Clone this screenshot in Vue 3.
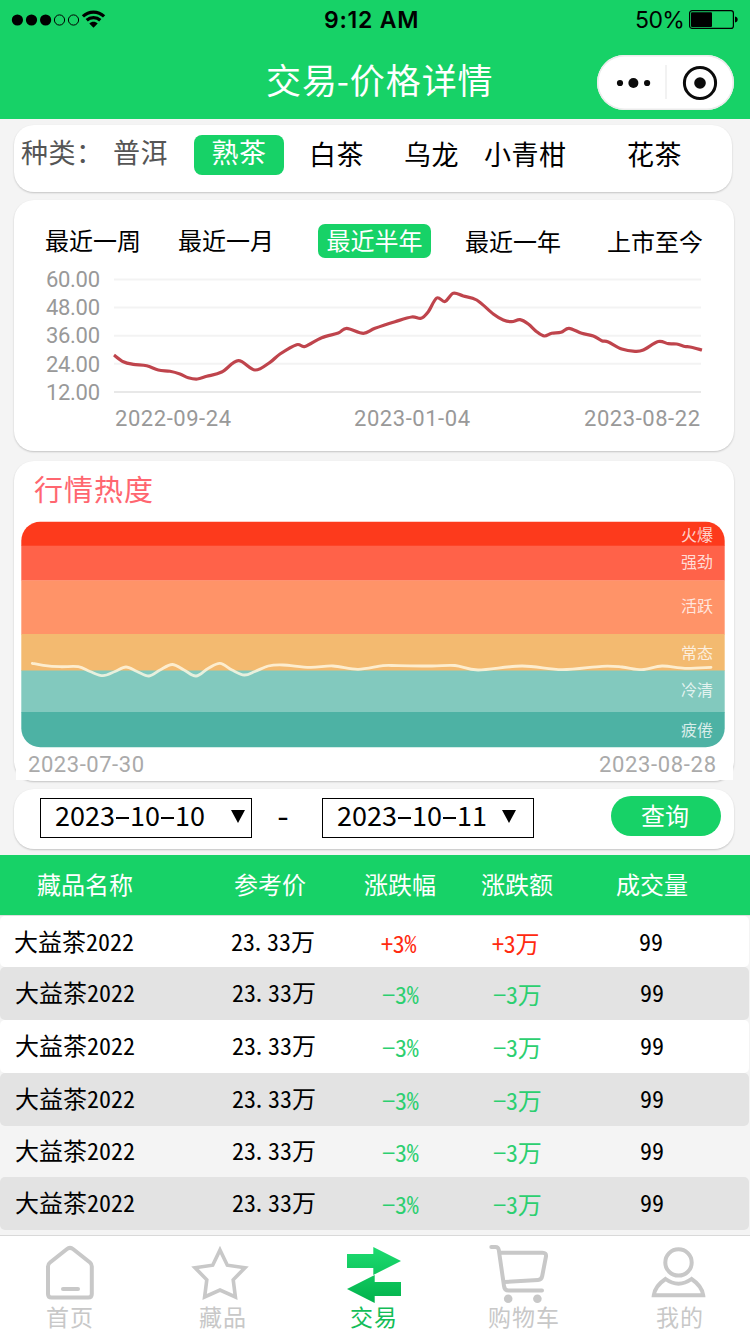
<template>
  <div class="page">
    <header class="header">
      <div class="status-bar">
        <svg class="signal" width="102" height="22" viewBox="0 0 102 22">
          <circle v-for="x in [12.4, 26.5, 40.6]" :key="x" :cx="x" cy="11" r="5.6" />
          <circle v-for="x in [54.5, 68.5]" :key="x" :cx="x" cy="11" r="5.1" class="signal-empty" />
          <g transform="translate(88.5 -0.5)" class="wifi">
            <path d="M-10.6 7.9C-4.6 2.2 4.6 2.2 10.6 7.9" />
            <path d="M-6.8 11.8C-3 8.3 3 8.3 6.8 11.8" />
            <path d="M0 19.2L-4.2 15C-1.8 12.7 1.8 12.7 4.2 15Z" class="wifi-dot" />
          </g>
        </svg>
        <span class="time">9:12 AM</span>
        <div class="battery">
          <span class="battery-text">50%</span>
          <svg width="50" height="20" viewBox="0 0 50 20">
            <rect x="0.6" y="0.6" width="43.8" height="17.8" rx="2.5" fill="none" stroke="#000" stroke-width="1.2" />
            <rect x="2" y="2.2" width="21" height="14.8" rx="1" />
            <path d="M46 6.5C49.6 7 49.6 12 46 12.5Z" />
          </svg>
        </div>
      </div>
      <div class="nav-bar">
        <h1 class="title">交易<i>-</i>价格详情</h1>
        <div class="capsule">
          <svg width="137" height="55" viewBox="0 0 137 55">
            <circle cx="23" cy="28" r="3.1" />
            <circle cx="36.4" cy="28" r="5" />
            <circle cx="50.1" cy="28" r="3.1" />
            <path d="M69 10V44" stroke="#efefef" stroke-width="1.6" />
            <circle cx="103" cy="28" r="15.6" fill="none" stroke="#0b0b0b" stroke-width="3" />
            <circle cx="103" cy="28" r="5.8" />
          </svg>
        </div>
      </div>
    </header>

    <section class="card kinds">
      <span class="kind-label">种类：</span>
      <span
        v-for="item in kinds"
        :key="item"
        class="kind"
        :class="{ active: item === activeKind, muted: item === '普洱' }"
        @click="activeKind = item"
      >{{ item }}</span>
    </section>

    <section class="card price">
      <div class="ranges">
        <span
          v-for="item in ranges"
          :key="item"
          class="range"
          :class="{ active: item === activeRange }"
          @click="activeRange = item"
        >{{ item }}</span>
      </div>
      <svg class="price-chart" width="720" height="176" viewBox="14 265 720 176">
        <g v-for="(label, i) in priceAxis" :key="label">
          <text x="46" :y="287.2 + i * 28.1" textLength="54" class="axis">{{ label }}</text>
          <line x1="114" x2="701" :y1="279.5 + i * 28.1" :y2="279.5 + i * 28.1" class="grid" :class="{ base: i === 4 }" />
        </g>
        <path :d="smooth(pricePoints)" class="price-line" />
        <text x="115" y="426" textLength="116" class="axis">2022-09-24</text>
        <text x="354" y="426" textLength="116" class="axis">2023-01-04</text>
        <text x="584" y="426" textLength="116" class="axis">2023-08-22</text>
      </svg>
    </section>

    <section class="card heat">
      <h2 class="heat-title">行情热度</h2>
      <svg class="heat-chart" width="717" height="264" viewBox="16 516 717 264">
        <defs>
          <clipPath id="heat-clip">
            <rect x="21.3" y="521.7" width="703.4" height="225.6" rx="19" />
          </clipPath>
        </defs>
        <rect x="16" y="516" width="717" height="264" fill="#fff" />
        <g clip-path="url(#heat-clip)">
          <rect v-for="band in bands" :key="band.name" x="21" :y="band.y" width="704" :height="band.h" :fill="band.color" />
        </g>
        <text v-for="band in bands" :key="band.name" x="681" :y="band.text" textLength="32" class="band-name">{{ band.name }}</text>
        <path :d="smooth(heatPoints)" class="heat-line" />
        <text x="28" y="771.5" textLength="116" class="axis heat-date">2023-07-30</text>
        <text x="599" y="771.5" textLength="117" class="axis heat-date">2023-08-28</text>
      </svg>
    </section>

    <section class="card query">
      <div class="date-box"><span>2023</span><i></i><span>10</span><i></i><span>10</span><b class="arrow"></b></div>
      <span class="to">-</span>
      <div class="date-box second"><span>2023</span><i></i><span>10</span><i></i><span>11</span><b class="arrow"></b></div>
      <button class="query-btn">查询</button>
    </section>

    <section class="table">
      <div class="thead">
        <span v-for="item in columns" :key="item">{{ item }}</span>
      </div>
      <div v-for="(row, i) in rows" :key="i" class="row" :class="row.up ? 'up' : 'down'">
        <span>大益茶2022</span>
        <span>23<em>.</em>33万</span>
        <span class="change">{{ row.up ? '+' : '−' }}3%</span>
        <span class="change">{{ row.up ? '+' : '−' }}3万</span>
        <span>99</span>
      </div>
    </section>

    <nav class="tab-bar">
      <a class="tab">
        <svg width="60" height="60" viewBox="40 1244 60 60" class="line-icon">
          <path d="M50 1262.5L66.7 1249.2Q70 1246.6 73.3 1249.2L90 1262.5Q91.8 1264 91.8 1266.5V1294Q91.8 1297.6 88.2 1297.6H51.6Q48 1297.6 48 1294V1266.5Q48 1264 50 1262.5Z" />
          <path d="M63 1289H78" stroke-linecap="round" />
        </svg>
        <span>首页</span>
      </a>
      <a class="tab collect">
        <svg width="60" height="60" viewBox="190 1244 60 60" class="line-icon">
          <path d="M220 1250L227.3 1265.2L245 1267.7L233.2 1279.8L235.4 1297L220 1290L204.6 1297L206.8 1279.8L195 1267.7L212.7 1265.2Z" stroke-width="3.6" />
        </svg>
        <span>藏品</span>
      </a>
      <a class="tab active">
        <svg width="60" height="60" viewBox="344 1244 60 60">
          <defs>
            <linearGradient id="trade" x1="0" y1="1247" x2="0" y2="1303" gradientUnits="userSpaceOnUse">
              <stop offset="0" stop-color="#1ddb70" />
              <stop offset="1" stop-color="#02b24c" />
            </linearGradient>
          </defs>
          <path d="M347 1254H373.3V1247L401 1261L373.3 1275V1268H347ZM401 1282H374.7V1275L347 1289L374.7 1303V1296H401Z" fill="url(#trade)" />
        </svg>
        <span>交易</span>
      </a>
      <a class="tab">
        <svg width="64" height="60" viewBox="492 1244 64 60" class="line-icon">
          <path d="M491.3 1247H495.5Q498.3 1247 498.8 1250L504 1286Q504.5 1290.5 508.5 1290.5H542" stroke-linecap="round" />
          <path d="M500 1252.8H542.5Q546.5 1252.8 546 1256.5L542.2 1276Q541.5 1279.8 538 1279.9L504 1282" />
          <circle cx="508.2" cy="1298.7" r="4.3" class="solid" />
          <circle cx="537.4" cy="1298.7" r="4.3" class="solid" />
        </svg>
        <span>购物车</span>
      </a>
      <a class="tab">
        <svg width="60" height="60" viewBox="650 1244 60 60" class="line-icon">
          <circle cx="678.5" cy="1262.4" r="13.2" />
          <path d="M665.5 1279Q655 1286 653.8 1295.3H703.2Q702 1286 691.5 1279Q678.5 1288.4 665.5 1279Z" />
        </svg>
        <span>我的</span>
      </a>
    </nav>
  </div>
</template>

<script setup>
import { ref } from 'vue'

const kinds = ['普洱', '熟茶', '白茶', '乌龙', '小青柑', '花茶']
const activeKind = ref('熟茶')

const ranges = ['最近一周', '最近一月', '最近半年', '最近一年', '上市至今']
const activeRange = ref('最近半年')

const priceAxis = ['60.00', '48.00', '36.00', '24.00', '12.00']
const pricePoints = [
  [114, 355], [123.3, 361.7], [133.3, 364.3], [146.7, 365.7], [158.3, 370], [170, 371.3], [180, 374],
  [188.3, 377.7], [197.3, 379], [206.7, 376.3], [221.7, 372], [238.3, 360.7], [255, 370], [270, 362.3],
  [280, 354], [296.7, 344.7], [305, 346.5], [321.7, 337.7], [338.3, 333], [346.7, 328.3], [363.3, 333.3],
  [375, 328.3], [395, 321.7], [411.7, 317], [421, 318.3], [428.3, 311.7], [436.7, 298], [445, 301.5],
  [453.3, 293.3], [463.3, 296], [476.7, 300], [493.3, 314], [503.3, 320], [511.7, 321.7], [520, 319.7],
  [528.3, 324], [536.7, 331.7], [544.3, 336], [551.7, 333.3], [561, 332.3], [569, 328.3], [581.7, 333.3],
  [593.3, 336], [601.7, 340.7], [608.3, 342], [621.7, 349], [635, 351.3], [643.3, 350], [658.3, 341.5],
  [668.3, 343.7], [676.7, 344], [685, 346.5], [690, 347], [702, 350]
]

const bands = [
  { name: '火爆', y: 521, h: 25, text: 541, color: '#fd3a1c' },
  { name: '强劲', y: 545.7, h: 35, text: 568, color: '#ff6249' },
  { name: '活跃', y: 580.5, h: 54, text: 612, color: '#ff9368' },
  { name: '常态', y: 634, h: 37, text: 659, color: '#f3ba70' },
  { name: '冷清', y: 670.5, h: 42, text: 696, color: '#82c9be' },
  { name: '疲倦', y: 712, h: 36, text: 736, color: '#4db2a4' }
]
const heatPoints = [
  [32.3, 663.3], [43.3, 665.3], [60, 666.7], [78.3, 666.7], [90, 671.5], [103, 675.7], [115, 671.5],
  [126, 667], [137, 671.5], [149, 676], [160, 670], [172.3, 664.5], [184, 670], [196, 676], [208, 668.5],
  [220, 663.3], [232, 670], [244.3, 675], [255, 671.5], [268.3, 666], [283, 665], [310, 667.3],
  [333, 666], [358, 669.3], [383, 665.7], [398, 665.7], [432, 666], [455, 665.5], [478, 670],
  [522, 666], [562, 669.7], [602, 666.3], [622, 667], [642, 669.7], [662, 666], [685, 668.3], [711, 667.3]
]

// Catmull-Rom 转三次贝塞尔
function smooth(points) {
  let d = `M${points[0][0]} ${points[0][1]}`
  for (let i = 0; i < points.length - 1; i++) {
    const p0 = points[i - 1] || points[i]
    const p1 = points[i]
    const p2 = points[i + 1]
    const p3 = points[i + 2] || p2
    d += `C${p1[0] + (p2[0] - p0[0]) / 6} ${p1[1] + (p2[1] - p0[1]) / 6} ${p2[0] - (p3[0] - p1[0]) / 6} ${p2[1] - (p3[1] - p1[1]) / 6} ${p2[0]} ${p2[1]}`
  }
  return d
}

const columns = ['藏品名称', '参考价', '涨跌幅', '涨跌额', '成交量']
const rows = [{ up: true }, { up: false }, { up: false }, { up: false }, { up: false }, { up: false }]
</script>

<style>
body {
  margin: 0;
  background: #f4f4f4;
}
</style>

<style scoped>
.page {
  width: 750px;
  height: 1334px;
  overflow: hidden;
  background: #f4f4f4;
  font-family: 'Noto Sans CJK SC', sans-serif;
  color: #000;
  white-space: nowrap;
  display: flex;
  flex-direction: column;
}

.header {
  height: 119px;
  background: #17d267;
  flex: none;
}

.status-bar {
  height: 40px;
  display: grid;
  grid-template-columns: 324px 1fr 115px;
  align-items: center;
  font-family: Inter, sans-serif;
}

.signal {
  margin-top: -1px;
}

.signal-empty {
  fill: none;
  stroke: #000;
  stroke-width: 1;
}

.signal {
  margin-left: 5px;
}

.wifi path {
  fill: none;
  stroke: #000;
  stroke-width: 3.2;
}

.wifi .wifi-dot {
  fill: #000;
  stroke: none;
}

.time {
  font-size: 23px;
  font-weight: 600;
  letter-spacing: 0.75px;
}

.battery {
  display: flex;
  align-items: center;
}

.battery-text {
  width: 54px;
  font-size: 23px;
  font-weight: 400;
  letter-spacing: -0.6px;
}

.nav-bar {
  height: 79px;
  display: grid;
  grid-template-columns: 1fr 137px;
  padding: 0 16px 0 266px;
}

.title {
  margin: 18px 0 0;
  color: #fff;
  font-size: 35px;
  line-height: 42px;
  font-weight: 400;
  letter-spacing: 0.9px;
}

.title i {
  font-style: normal;
  margin-left: -1px;
}

.capsule {
  width: 137px;
  height: 55px;
  margin-top: 15px;
  border-radius: 28px;
  background: #fff;
  box-shadow: inset 0 0 0 1.5px #ebebeb;
}

.capsule svg {
  display: block;
  fill: #0b0b0b;
}

.card {
  width: 720px;
  margin-left: 14px;
  box-sizing: border-box;
  background: #fff;
  border-radius: 20px;
  box-shadow: 0 1px 2px rgba(0, 0, 0, 0.2);
  flex: none;
}

.kinds {
  width: 718px;
  height: 67px;
  margin-top: 6px;
  padding: 10px 0 0 7px;
  display: grid;
  grid-template-columns: 92px 81px 115px 95px 80px 143px 80px;
  align-items: start;
  font-size: 27px;
  line-height: 37px;
  letter-spacing: 0.5px;
}

.kind-label,
.kind.muted {
  color: #555;
  line-height: 34px;
}

.kind.active {
  width: 90px;
  height: 40px;
  line-height: 34px;
  border-radius: 8px;
  background: #17d267;
  color: #fff;
  text-align: center;
}

.price {
  height: 251px;
  margin-top: 8px;
  padding-top: 24px;
}

.ranges {
  display: grid;
  grid-template-columns: 133px 140px 147px 142px 100px;
  height: 34px;
  padding-left: 31px;
  font-size: 24px;
  line-height: 31px;
}

.range:nth-child(n + 4) {
  line-height: 34px;
}

.range.active {
  width: 113px;
  height: 34px;
  border-radius: 7px;
  background: #17d267;
  color: #fff;
  text-align: center;
}

.price-chart {
  display: block;
  margin-top: 7px;
}

.axis {
  font-family: Roboto, sans-serif;
  font-size: 22px;
  fill: #999;
}

.heat-date {
  fill: #aaa;
}

.grid {
  stroke: #f3f3f3;
  stroke-width: 2;
}

.grid.base {
  stroke: #e8e8e8;
}

.price-line {
  fill: none;
  stroke: #bf444c;
  stroke-width: 3.2;
}

.heat {
  height: 320px;
  margin-top: 10px;
}

.heat-title {
  margin: 0;
  height: 55px;
  padding-left: 20px;
  color: #ff6670;
  font-size: 29px;
  line-height: 55px;
  font-weight: 400;
  letter-spacing: 1px;
}

.heat-chart {
  display: block;
  margin-left: 2px;
}

.band-name {
  font-size: 16px;
  fill: rgba(255, 255, 255, 0.78);
}

.heat-line {
  fill: none;
  stroke: rgba(255, 250, 230, 0.8);
  stroke-width: 2.8;
  stroke-linecap: round;
}

.query {
  height: 60px;
  margin-top: 8px;
  padding: 0 13px 0 26px;
  display: flex;
}

.date-box {
  width: 212px;
  height: 40px;
  margin-top: 9px;
  box-sizing: border-box;
  border: 1px solid #000;
  padding-left: 14px;
  display: flex;
  align-items: center;
  font-size: 27px;
  line-height: 32px;
}

.date-box span {
  margin-top: -6px;
}

.date-box i {
  width: 13px;
  height: 1.5px;
  margin: 0 1px;
  background: #000;
}

.arrow {
  margin: 0 6px 3px auto;
  border: solid transparent;
  border-width: 13px 7px 0;
  border-top-color: #000;
}

.second .arrow {
  margin-right: 17px;
}

.to {
  width: 70px;
  text-align: center;
  font-size: 33px;
  line-height: 50px;
  padding-right: 8px;
  box-sizing: border-box;
}

.query-btn {
  width: 110px;
  height: 40px;
  margin: 7px 0 0 auto;
  padding: 0 2px 2px 0;
  border: 0;
  border-radius: 20px;
  background: #17d267;
  color: #fff;
  font-family: inherit;
  font-size: 24px;
  line-height: 36px;
}

.table {
  margin-top: 6px;
  height: 380px;
  flex: none;
}

.thead,
.row {
  display: grid;
  align-items: center;
  font-size: 24px;
  box-sizing: border-box;
}

.thead {
  height: 61px;
  padding: 0 0 3px 37px;
  grid-template-columns: 197px 130px 117px 135px 100px;
  background: #17d267;
  color: #fff;
  border-bottom: 1px solid #dedede;
}

.row {
  height: 53px;
  width: 749px;
  padding: 0 0 4px 15px;
  grid-template-columns: 217px 150px 111px 147px 80px;
  border-radius: 5px;
  font-feature-settings: 'hwid';
}

.row:nth-child(2) {
  height: 51px;
  padding-left: 14px;
  padding-bottom: 3px;
}

.row:nth-child(2),
.row:nth-child(4) {
  background: #fff;
}

.row:nth-child(odd) {
  background: #e3e3e3;
}

.row:nth-child(6) {
  height: 51px;
}

.row em {
  font-style: normal;
  margin: 0 3px 0 -3px;
}

.change {
  padding-top: 4px;
  font-size: 24px;
  letter-spacing: -0.3px;
}

.up .change {
  color: #ff2a10;
}

.down .change {
  color: #2ccf70;
}

.tab-bar {
  height: 99px;
  flex: none;
  border-top: 1px solid #d9d9d9;
  background: #fff;
  display: grid;
  grid-template-columns: 140px 160px 148px 152px 160px;
}

.tab {
  display: flex;
  flex-direction: column;
  align-items: center;
  padding-top: 8px;
  font-size: 23px;
  line-height: 24px;
  letter-spacing: 1px;
  color: #c8c8c8;
}

.tab.active {
  color: #13bd58;
}

.collect span {
  padding-left: 6px;
}

.line-icon {
  fill: none;
  stroke: #c8c8c8;
  stroke-width: 4;
  overflow: visible;
}

.line-icon .solid {
  fill: #c8c8c8;
  stroke: none;
}
</style>
